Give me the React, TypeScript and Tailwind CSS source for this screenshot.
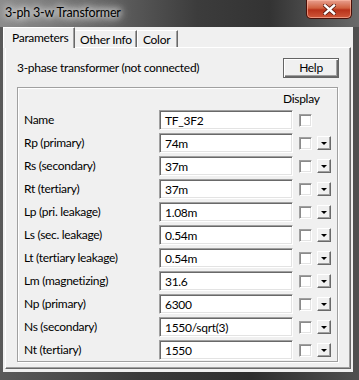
import React from "react";

const rows: { label: string; value: string; drop: boolean }[] = [
    { label: "Name", value: "TF_3F2", drop: false },
    { label: "Rp (primary)", value: "74m", drop: true },
    { label: "Rs (secondary)", value: "37m", drop: true },
    { label: "Rt (tertiary)", value: "37m", drop: true },
    { label: "Lp (pri. leakage)", value: "1.08m", drop: true },
    { label: "Ls (sec. leakage)", value: "0.54m", drop: true },
    { label: "Lt (tertiary leakage)", value: "0.54m", drop: true },
    { label: "Lm (magnetizing)", value: "31.6", drop: true },
    { label: "Np (primary)", value: "6300", drop: true },
    { label: "Ns (secondary)", value: "1550/sqrt(3)", drop: true },
    { label: "Nt (tertiary)", value: "1550", drop: true },
];

function Row({ label, value, drop }: { label: string; value: string; drop: boolean }) {
    return (
        <div className="flex items-center h-[20px]">
            <span className="w-[135px] shrink-0 leading-none whitespace-nowrap">{label}</span>
            {/* sunken edit box */}
            <div className="w-[134px] h-[20px] shrink-0 bg-white border border-t-[#a0a0a0] border-l-[#a0a0a0] border-r-white border-b-white shadow-[inset_1px_1px_0_#696969,inset_-1px_-1px_0_#e3e3e3] flex items-center pl-[5px] pt-[1px] leading-none">
                {value}
            </div>
            <div className="ml-[6px] w-[13px] h-[13px] shrink-0 bg-white border border-t-[#a0a0a0] border-l-[#a0a0a0] border-r-white border-b-white shadow-[inset_1px_1px_0_#8a8a8a,inset_-1px_-1px_0_#e3e3e3]" />
            {drop && (
                <div className="ml-[5px] w-[14px] h-[14px] shrink-0 bg-[#f0f0f0] border border-t-white border-l-white border-r-[#696969] border-b-[#696969] shadow-[inset_-1px_-1px_0_#a0a0a0] flex items-center justify-center">
                    <span className="w-0 h-0 border-l-[3px] border-r-[3px] border-t-[3px] border-l-transparent border-r-transparent border-t-black" />
                </div>
            )}
        </div>
    );
}

export default function App() {
    return (
        <div
            className="w-[359px] h-[380px] flex flex-col overflow-hidden bg-[linear-gradient(90deg,#5a5a5a,#3a3a3a_40%,#2e2e2e_70%,#505050)] text-black"
            style={{ fontFamily: 'Lato, "Noto Sans", sans-serif' }}
        >
            {/* title bar */}
            <div className="h-[27px] shrink-0 flex items-start bg-[linear-gradient(90deg,#8c8c8c,#6a6a6a_25%,#3c3c3c_55%,#333333_75%,#6a6a6a)]">
                <span className="mt-[5px] ml-[5px] text-[12.5px] tracking-[-0.2px] leading-[16px] text-black [text-shadow:0_0_6px_#fff,0_0_10px_#fff,0_0_14px_#e8e8e8]">
                    3-ph 3-w Transformer
                </span>
                <div className="ml-auto mr-[7px] w-[46px] h-[19px] rounded-b-[5px] border border-t-0 border-[#4a1008] bg-[linear-gradient(180deg,#e8a090,#d0603f_45%,#b8321a_55%,#d0583a)] shadow-[inset_0_0_0_1px_rgba(255,190,170,0.6)] flex items-center justify-center">
                    <svg width="13" height="11" viewBox="0 0 13 11">
                        <path d="M2 1.5 L11 9.5 M11 1.5 L2 9.5" stroke="#5a1a10" strokeWidth="4" strokeLinecap="square" />
                        <path d="M2 1.5 L11 9.5 M11 1.5 L2 9.5" stroke="#ffffff" strokeWidth="2.4" strokeLinecap="square" />
                    </svg>
                </div>
            </div>

            {/* client area */}
            <div className="flex-1 ml-[3px] mr-[6px] mb-[8px] bg-[#f0f0f0] flex flex-col px-[2px] pb-[3px] text-[12px] tracking-[-0.3px]">
                {/* tabs */}
                <div className="h-[20px] flex items-end">
                    <div className="-ml-[2px] w-[72px] h-[21px] -mb-[1px] relative z-10 bg-[#f0f0f0] border border-b-0 border-t-white border-l-white border-r-[#696969] shadow-[inset_-1px_0_0_#a0a0a0] flex items-center pl-[8px] pb-[1px] leading-none whitespace-nowrap">
                        Parameters
                    </div>
                    <div className="w-[62px] h-[17px] bg-[#f0f0f0] border border-b-0 border-t-white border-l-transparent border-r-[#696969] shadow-[inset_-1px_0_0_#a0a0a0] flex items-center pl-[4px] pt-[1px] leading-none whitespace-nowrap">
                        Other Info
                    </div>
                    <div className="w-[41px] h-[17px] bg-[#f0f0f0] border border-b-0 border-t-white border-l-white border-r-[#696969] shadow-[inset_-1px_0_0_#a0a0a0] flex items-center pl-[5px] pt-[1px] leading-none whitespace-nowrap">
                        Color
                    </div>
                </div>

                {/* tab page */}
                <div className="flex-1 border border-t-white border-l-white border-r-[#696969] border-b-[#696969] shadow-[inset_-1px_-1px_0_#a0a0a0] px-[11px]">
                    <div className="mt-[10px] h-[20px] flex items-center justify-between">
                        <span className="leading-none whitespace-nowrap">3-phase transformer (not connected)</span>
                        <div className="w-[56px] h-[20px] border border-[#646464] bg-[#f0f0f0] shadow-[inset_1px_1px_0_#fff,inset_-1px_-1px_0_#696969,inset_-2px_-2px_0_#a0a0a0] flex items-center justify-center leading-none">
                            Help
                        </div>
                    </div>

                    <div className="mt-[9px] mr-[1px] border border-[#a0a0a0] shadow-[1px_1px_0_#fff,inset_1px_1px_0_#fff] pl-[6px] pb-[1px]">
                        <div className="h-[22px] flex items-center pl-[259px] leading-none">Display</div>
                        <div className="flex flex-col gap-[3px]">
                            {rows.map((r) => (
                                <Row key={r.label} {...r} />
                            ))}
                        </div>
                    </div>
                </div>
            </div>
        </div>
    );
}
